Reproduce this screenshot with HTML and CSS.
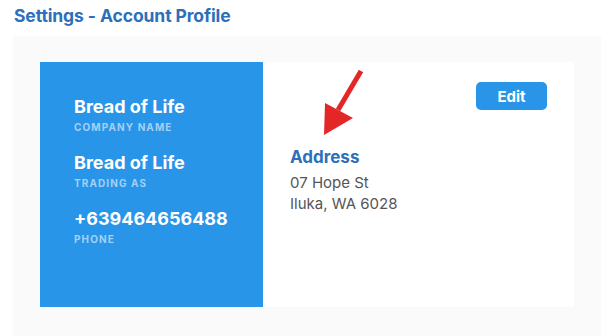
FILE: index.html
```html
<!DOCTYPE html>
<html lang="en">
<head>
    <meta charset="UTF-8">
    <meta name="viewport" content="width=device-width, initial-scale=1.0">
    <title>Settings - Account Profile</title>
    <link rel="stylesheet" href="styles.css">
</head>
<body>
    <h1 class="page-title">Settings - Account Profile</h1>

    <div class="panel">
        <div class="profile-card">
            <!-- Resumo da empresa -->
            <div class="company-side">
                <div class="info-group">
                    <div class="info-value">Bread of Life</div>
                    <div class="info-label">Company Name</div>
                </div>
                <div class="info-group">
                    <div class="info-value">Bread of Life</div>
                    <div class="info-label">Trading As</div>
                </div>
                <div class="info-group">
                    <div class="info-value">+639464656488</div>
                    <div class="info-label">Phone</div>
                </div>
            </div>

            <!-- Endereço -->
            <div class="address-side">
                <div class="edit-row">
                    <button class="edit-btn">Edit</button>
                </div>
                <h2 class="address-title">Address</h2>
                <p class="address-line">07 Hope St</p>
                <p class="address-line">Iluka, WA 6028</p>

                <svg class="arrow" viewBox="0 0 50 70" xmlns="http://www.w3.org/2000/svg">
                    <line x1="47" y1="3" x2="24" y2="42" stroke="#e32626" stroke-width="5"/>
                    <polygon points="11,35 39,50 10,67" fill="#e32626"/>
                </svg>
            </div>
        </div>
    </div>
</body>
</html>
```

FILE: styles.css
```css
body {
    font-family: Inter, 'Noto Sans', sans-serif;
    margin: 0;
    background: #ffffff;
    color: #333;
    overflow: hidden;
}

.page-title {
    margin: 0;
    padding: 5px 0 0 14px;
    height: 31px;
    font-size: 17.5px;
    font-weight: 700;
    color: #2c6fba;
    letter-spacing: -0.1px;
}

.panel {
    margin-left: 13px;
    width: 561px;
    height: 274px;
    padding: 26px 0 0 27px;
    background: #fafafa;
}

.profile-card {
    display: flex;
    width: 534px;
    height: 245px;
    background: #ffffff;
}

.company-side {
    width: 189px;
    padding: 34px 0 0 34px;
    background: #2995e9;
    color: #ffffff;
}

.info-group {
    height: 56px;
}

.info-value {
    font-size: 18px;
    font-weight: 700;
    line-height: 22px;
}

.info-label {
    margin-top: 3px;
    font-size: 10px;
    font-weight: 700;
    letter-spacing: 1.1px;
    text-transform: uppercase;
    color: #a3d0f6;
}

.address-side {
    position: relative;
    flex: 1;
    padding: 20px 27px 0 27px;
}

.edit-row {
    display: flex;
    justify-content: flex-end;
}

.edit-btn {
    width: 71px;
    height: 28px;
    border: none;
    border-radius: 5px;
    background: #2995e9;
    color: #ffffff;
    font-family: inherit;
    font-size: 15px;
    font-weight: 700;
}

.address-title {
    margin: 36px 0 0 0;
    font-size: 17px;
    font-weight: 700;
    line-height: 22px;
    color: #2c6fba;
}

.address-line {
    margin: 0;
    font-size: 15px;
    line-height: 21px;
    color: #555555;
}

.address-title + .address-line {
    margin-top: 4px;
}

.arrow {
    position: absolute;
    left: 51px;
    top: 6px;
    width: 50px;
    height: 70px;
}
```
